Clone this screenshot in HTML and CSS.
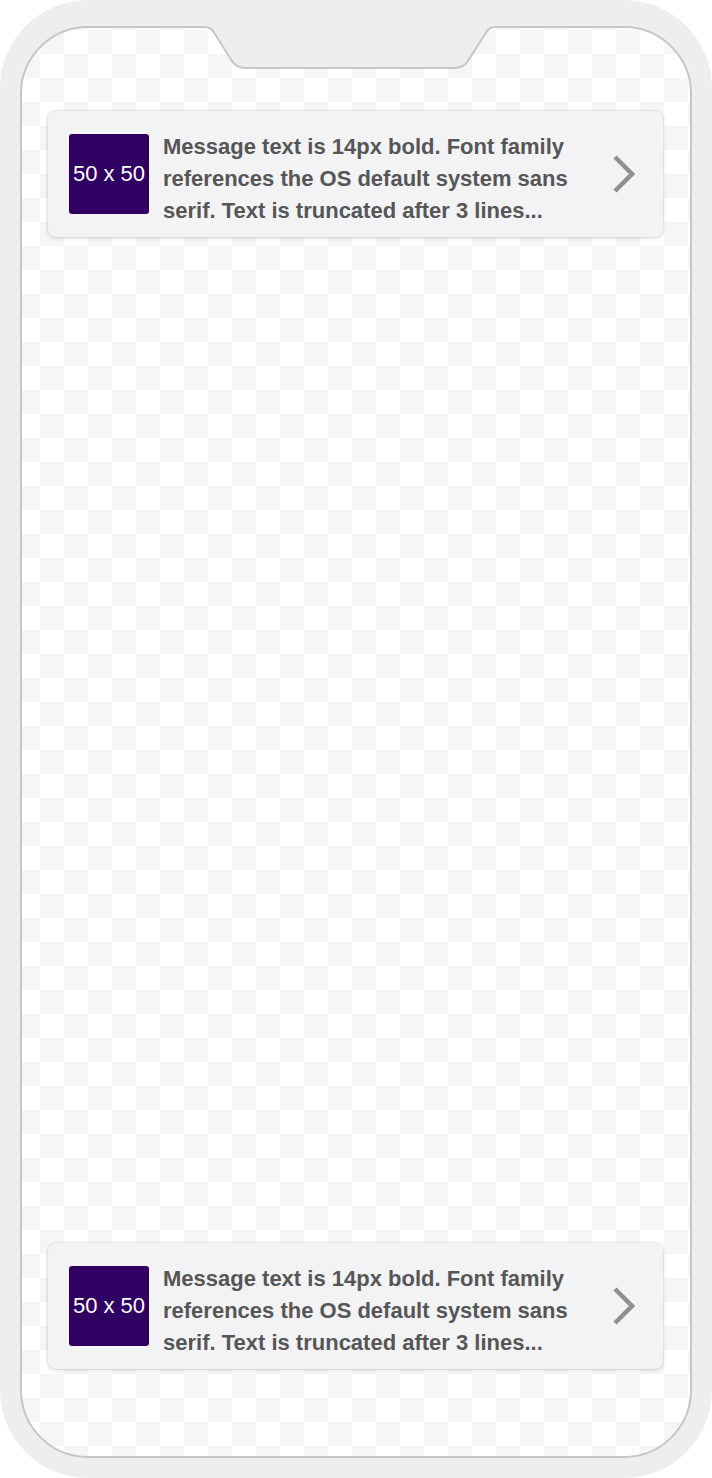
FILE: index.html
```html
<!DOCTYPE html>
<html lang="en">
<head>
<meta charset="UTF-8" />
<meta name="viewport" content="width=device-width, initial-scale=1" />
<title>In-app message preview</title>
<link rel="stylesheet" href="styles.css">
</head>
<body>
  <div class="phone">
    <div class="screen">
      <svg class="notch" viewBox="0 0 300 44" aria-hidden="true">
        <path class="notch-fill" d="M0 0 H300 V1 H296 C290 1 288 3 285 8 L268 35 C265 40 261 42 254 42 H46 C39 42 35 40 32 35 L15 8 C12 3 10 1 4 1 H0 Z" />
        <path class="notch-line" d="M0 1 H4 C10 1 12 3 15 8 L32 35 C35 40 39 42 46 42 H254 C261 42 265 40 268 35 L285 8 C288 3 290 1 296 1 H300" />
      </svg>

      <div class="message-card">
        <div class="thumb">50 x 50</div>
        <p class="message-text">Message text is 14px bold. Font family references the OS default system sans serif. Text is truncated after 3 lines...</p>
        <svg class="chevron" viewBox="0 0 22 38" aria-hidden="true">
          <polyline points="2,2 19,19 2,36" />
        </svg>
      </div>

      <div class="message-card">
        <div class="thumb">50 x 50</div>
        <p class="message-text">Message text is 14px bold. Font family references the OS default system sans serif. Text is truncated after 3 lines...</p>
        <svg class="chevron" viewBox="0 0 22 38" aria-hidden="true">
          <polyline points="2,2 19,19 2,36" />
        </svg>
      </div>
    </div>
  </div>
</body>
</html>
```

FILE: styles.css
```css
/* Reset */
* {
  margin: 0;
  padding: 0;
  box-sizing: border-box;
}

body {
  background: #fff;
  font-family: "Liberation Sans", Arial, sans-serif;
}

/* Device frame */
.phone {
  width: 712px;
  height: 1478px;
  background: #eeeeee;
  border-radius: 88px;
  padding: 26px 20px 20px;
  display: flex;
}

/* Screen with checkerboard backdrop */
.screen {
  position: relative;
  flex: 1;
  border: 2px solid #c6c6c6;
  border-radius: 68px;
  background-color: #fff;
  background-image: conic-gradient(#fff 25%, #f6f6f6 0 50%, #fff 0 75%, #f6f6f6 0);
  background-size: 48px 48px;
  background-position: -6px -22px;
  display: flex;
  flex-direction: column;
  justify-content: space-between;
  padding: 83px 27px 87px 26px;
}

.notch {
  position: absolute;
  top: -2px;
  left: 178px;
  width: 300px;
  height: 44px;
  overflow: visible;
}

.notch-fill {
  fill: #eeeeee;
}

.notch-line {
  fill: none;
  stroke: #c6c6c6;
  stroke-width: 2;
}

/* Message card */
.message-card {
  height: 126px;
  background: #f3f3f5;
  border-radius: 8px;
  box-shadow: 0 0 0 1px rgba(0, 0, 0, 0.04), 0 1px 4px rgba(0, 0, 0, 0.16);
  display: flex;
  align-items: center;
  gap: 14px;
  padding: 0 28px 0 21px;
}

.thumb {
  flex: none;
  width: 80px;
  height: 80px;
  border-radius: 3px;
  background: #2f0062;
  color: #fff;
  font-size: 22px;
  display: flex;
  justify-content: center;
  align-items: center;
}

.message-text {
  flex: 1;
  font-size: 22px;
  line-height: 32px;
  font-weight: bold;
  color: #565656;
  margin-top: 9px;
}

.chevron {
  flex: none;
  width: 22px;
  height: 38px;
}

.chevron polyline {
  fill: none;
  stroke: #909090;
  stroke-width: 4.5;
}
```
